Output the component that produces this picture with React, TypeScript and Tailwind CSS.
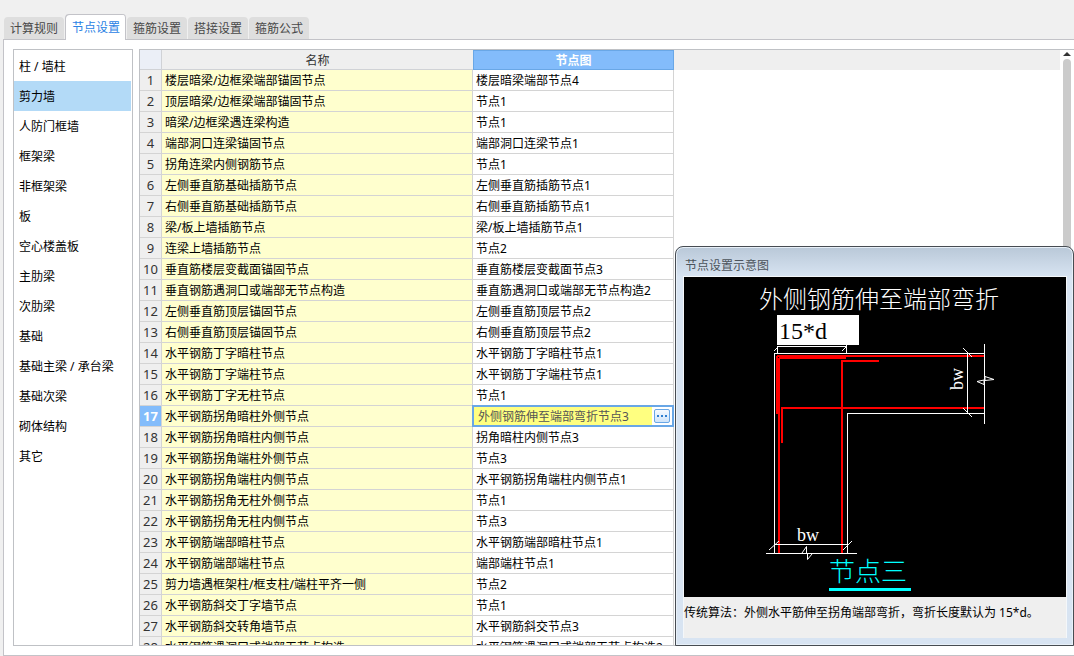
import { useState } from 'react';
import { clsx } from 'clsx';

const TABS = ['计算规则', '节点设置', '箍筋设置', '搭接设置', '箍筋公式'];

const CATEGORIES = [
    '柱 / 墙柱',
    '剪力墙',
    '人防门框墙',
    '框架梁',
    '非框架梁',
    '板',
    '空心楼盖板',
    '主肋梁',
    '次肋梁',
    '基础',
    '基础主梁 / 承台梁',
    '基础次梁',
    '砌体结构',
    '其它',
];

const ROWS: [string, string][] = [
    ['楼层暗梁/边框梁端部锚固节点', '楼层暗梁端部节点4'],
    ['顶层暗梁/边框梁端部锚固节点', '节点1'],
    ['暗梁/边框梁遇连梁构造', '节点1'],
    ['端部洞口连梁锚固节点', '端部洞口连梁节点1'],
    ['拐角连梁内侧钢筋节点', '节点1'],
    ['左侧垂直筋基础插筋节点', '左侧垂直筋插筋节点1'],
    ['右侧垂直筋基础插筋节点', '右侧垂直筋插筋节点1'],
    ['梁/板上墙插筋节点', '梁/板上墙插筋节点1'],
    ['连梁上墙插筋节点', '节点2'],
    ['垂直筋楼层变截面锚固节点', '垂直筋楼层变截面节点3'],
    ['垂直钢筋遇洞口或端部无节点构造', '垂直筋遇洞口或端部无节点构造2'],
    ['左侧垂直筋顶层锚固节点', '左侧垂直筋顶层节点2'],
    ['右侧垂直筋顶层锚固节点', '右侧垂直筋顶层节点2'],
    ['水平钢筋丁字暗柱节点', '水平钢筋丁字暗柱节点1'],
    ['水平钢筋丁字端柱节点', '水平钢筋丁字端柱节点1'],
    ['水平钢筋丁字无柱节点', '节点1'],
    ['水平钢筋拐角暗柱外侧节点', '外侧钢筋伸至端部弯折节点3'],
    ['水平钢筋拐角暗柱内侧节点', '拐角暗柱内侧节点3'],
    ['水平钢筋拐角端柱外侧节点', '节点3'],
    ['水平钢筋拐角端柱内侧节点', '水平钢筋拐角端柱内侧节点1'],
    ['水平钢筋拐角无柱外侧节点', '节点1'],
    ['水平钢筋拐角无柱内侧节点', '节点3'],
    ['水平钢筋端部暗柱节点', '水平钢筋端部暗柱节点1'],
    ['水平钢筋端部端柱节点', '端部端柱节点1'],
    ['剪力墙遇框架柱/框支柱/端柱平齐一侧', '节点2'],
    ['水平钢筋斜交丁字墙节点', '节点1'],
    ['水平钢筋斜交转角墙节点', '水平钢筋斜交节点3'],
    ['水平钢筋遇洞口或端部无节点构造', '水平钢筋遇洞口或端部无节点构造2'],
];

const SELECTED_ROW = 16;

function TabBar({ active, onChange }: { active: number; onChange: (i: number) => void }) {
    return (
        <div role="tablist" className="flex items-end gap-px pl-1 h-10 shrink-0 relative -mb-px">
            {TABS.map((tab, i) => (
                <button
                    key={tab}
                    role="tab"
                    aria-selected={i === active}
                    onClick={() => onChange(i)}
                    className={clsx(
                        'rounded-t pt-0.5 pr-1.5',
                        i === active
                            ? 'h-[26px] pl-[7px] bg-white text-[#2a82e4] shadow-[inset_1px_1px_0_#c3c3c8,inset_-1px_0_0_#c3c3c8]'
                            : 'h-[22px] mb-px pl-1.5 bg-[#dedede] text-[#484848]'
                    )}
                >
                    {tab}
                </button>
            ))}
        </div>
    );
}

function CategoryList({ active, onChange }: { active: number; onChange: (i: number) => void }) {
    return (
        <nav className="w-[120px] shrink-0 border border-[#bfc1c5] bg-white py-px pr-px overflow-hidden">
            {CATEGORIES.map((name, i) => (
                <button
                    key={name}
                    onClick={() => onChange(i)}
                    className={clsx(
                        'block w-full h-[30px] pt-0.5 pl-[5px] text-left text-black whitespace-nowrap',
                        i === active && 'bg-[#b3daf7]'
                    )}
                >
                    {name}
                </button>
            ))}
        </nav>
    );
}

function NodeEditor({ value }: { value: string }) {
    return (
        <div className="flex items-center h-[22px] -mx-px -my-px border-2 border-[#69a7e6] bg-[#ffff80]">
            <input
                aria-label="节点图"
                defaultValue={value}
                className="flex-1 min-w-0 h-full pl-1 bg-transparent text-[#555] outline-none"
            />
            <div className="flex items-center justify-center h-full w-5 bg-white">
                <button
                    aria-label="选择节点"
                    className="flex items-center justify-center w-4 h-3.5 rounded-xs border border-[#69a7e6] bg-linear-to-b from-[#f6faff] to-[#cfe4fa]"
                >
                    <svg viewBox="0 0 10 2" className="w-2.5 h-0.5 shrink-0" fill="#2f7fd0">
                        <rect x="0" width="2" height="2" />
                        <rect x="4" width="2" height="2" />
                        <rect x="8" width="2" height="2" />
                    </svg>
                </button>
            </div>
        </div>
    );
}

function NodeTable() {
    return (
        <table className="w-full table-fixed border-separate border-spacing-0 text-black">
            <colgroup>
                <col className="w-[22px]" />
                <col className="w-[311px]" />
                <col className="w-[201px]" />
                <col />
            </colgroup>
            <thead>
                <tr className="h-5 leading-[17px]">
                    <th className="p-0 border-r border-b border-[#d0d2d6] bg-[#ebeff7]" />
                    <th className="p-0 pt-0.5 border-b border-[#d0d2d6] bg-[#efefef] font-normal text-[#333]">名称</th>
                    <th className="p-0 pt-px border border-[#69a7e6] bg-[#83bcfb] font-bold text-white">节点图</th>
                    <th className="p-0 bg-[#efefef]" />
                </tr>
            </thead>
            <tbody>
                {ROWS.map(([name, node], i) => {
                    const selected = i === SELECTED_ROW;
                    return (
                        <tr key={name} className="h-[21px]">
                            <th
                                className={clsx(
                                    'p-0 border-r border-b border-[#d4d4d4] text-[13px]',
                                    selected ? 'bg-[#83bcfb] font-bold text-white' : 'bg-[#efefef] font-normal text-[#333]'
                                )}
                            >
                                {i + 1}
                            </th>
                            <td className="p-0 pt-0.5 pl-[3px] border-r border-b border-[#d4d4d4] bg-[#ffffce] whitespace-nowrap">
                                {name}
                            </td>
                            <td
                                className={clsx(
                                    'p-0 border-r border-b border-[#d4d4d4] whitespace-nowrap',
                                    !selected && 'pt-0.5 pl-[3px]'
                                )}
                            >
                                {selected ? <NodeEditor value={node} /> : node}
                            </td>
                            <td className="p-0" />
                        </tr>
                    );
                })}
            </tbody>
        </table>
    );
}

function Scrollbar() {
    return (
        <div className="w-3.5 shrink-0 flex flex-col items-center bg-white">
            <svg viewBox="0 0 8 4" className="w-2 h-1 mt-0.5 mb-[3px] shrink-0" fill="#333">
                <path d="M4 0 L8 4 H0 Z" />
            </svg>
            <div className="w-2 flex-1 rounded-t bg-[#cbcbcb]" />
        </div>
    );
}

function NodeDiagram() {
    return (
        <svg viewBox="0 0 382 320" className="block w-full bg-black" role="img" aria-label="节点三">
            <text
                x="75"
                y="31"
                fill="#fff"
                fontSize="24"
                fontWeight="300"
                fontFamily="'Noto Sans CJK SC', sans-serif"
            >
                外侧钢筋伸至端部弯折
            </text>

            {/* wall outline */}
            <g fill="none" stroke="#fff" shapeRendering="crispEdges">
                <path d="M300 76.5 H90.5 V276" />
                <path d="M300 136.5 H163.5 V276" />
                <path d="M300.5 67 V147" />
                <path d="M82 276.5 H173" />
            </g>

            {/* rebar */}
            <g fill="#f00" shapeRendering="crispEdges">
                <rect x="93" y="78" width="207" height="2" />
                <rect x="93" y="78" width="69" height="4" />
                <rect x="92" y="79" width="4" height="58" />
                <rect x="94" y="79" width="2" height="197" />
                <rect x="157" y="83" width="2" height="193" />
                <rect x="157" y="83" width="38" height="2" />
                <rect x="97" y="130" width="203" height="2" />
                <rect x="97" y="131" width="2" height="35" />
                <rect x="94" y="80" width="1" height="1" fill="#000" />
            </g>

            {/* dimension lines */}
            <g fill="none" stroke="#fff" shapeRendering="crispEdges">
                <path d="M93.5 76 V69.5 H162.5 V76" />
                <path d="M162.5 68 V70" />
                <path d="M283.5 76 V137" />
                <path d="M90 267.5 H164" />
            </g>
            <g fill="none" stroke="#fff">
                <path d="M90 74 L94 70 M158 74 L162 70" />
                <path d="M279 71 L288 80 M279 131 L288 140" />
                <path d="M85 273 L95 264 M159 273 L168 264" />
                <path d="M301 99.5 L310 102.5 L301 103.5 V99.5 Z" />
                <path d="M300 103 L293 104.5 L300 107.5 Z" />
                <path d="M118 276 L122.5 269.5 V276 M123.5 276 V282.5 L128 277" />
            </g>

            <g fill="#fff" fontSize="18" fontFamily="'Liberation Serif', serif">
                <text x="113" y="264">bw</text>
                <text transform="translate(279 113) rotate(-90)">bw</text>
            </g>

            <text
                x="145"
                y="304"
                fill="#0ff"
                fontSize="26"
                fontWeight="300"
                fontFamily="'Noto Sans CJK SC', sans-serif"
            >
                节点三
            </text>
            <rect x="145" y="311" width="82" height="3" fill="#0ff" />
        </svg>
    );
}

function DiagramPanel() {
    return (
        <section className="absolute right-0 bottom-2.5 w-[399px] h-[400px] flex flex-col rounded-t-lg border border-[#474c52] bg-[#d8e4f2] pl-[7px] pr-1.5 pb-[7px] shadow-[inset_0_0_0_1px_#e8f0f8] bg-linear-to-b from-[#b9c8d8] to-[#d8e4f2] to-[30px]">
            <h2 className="h-[29px] shrink-0 pt-2.5 pl-0.5 leading-[18px] text-[#4c535b]">节点设置示意图</h2>
            <div className="flex-1 border-t border-x border-[#f4f7fa] bg-[#efefef]">
                <div className="relative">
                    <NodeDiagram />
                    <input
                        aria-label="弯折长度"
                        defaultValue="15*d"
                        className="absolute left-[93px] top-[38px] w-[82px] h-[30px] pt-0.5 pl-0.5 bg-white text-black text-[24px] font-['Liberation_Serif',serif] outline-none"
                    />
                </div>
                <p className="pt-[7px] leading-[18px] text-black whitespace-nowrap">
                    传统算法：外侧水平筋伸至拐角端部弯折，弯折长度默认为 15*d。
                </p>
            </div>
        </section>
    );
}

export default function App() {
    const [tab, setTab] = useState(1);
    const [category, setCategory] = useState(1);

    return (
        <div className="relative h-screen flex flex-col overflow-hidden bg-[#f0f0f0] text-[12px] leading-[18px] font-['Noto_Sans','Noto_Sans_CJK_SC',sans-serif]">
            <TabBar active={tab} onChange={setTab} />
            <main className="flex-1 min-h-0 flex gap-1.5 ml-[3px] py-[9px] pl-[9px] border-l border-y border-[#c3c3c8] bg-white">
                <CategoryList active={category} onChange={setCategory} />
                <div className="flex-1 min-w-0 flex border-l border-y border-[#bfc1c5] overflow-hidden">
                    <div className="flex-1 min-w-0 overflow-hidden">
                        <NodeTable />
                    </div>
                    <Scrollbar />
                </div>
            </main>
            <DiagramPanel />
        </div>
    );
}
